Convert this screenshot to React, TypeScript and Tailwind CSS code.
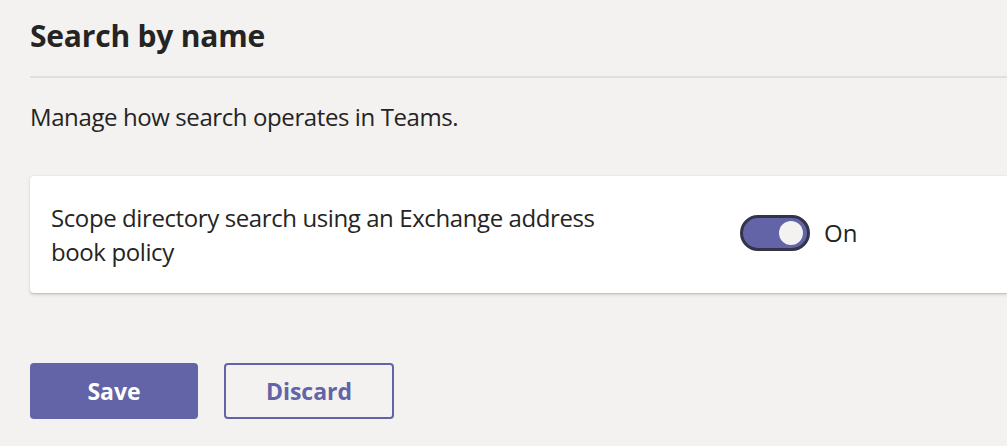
import React from "react";

export default function App() {
  return (
    <div className="w-[1007px] h-[446px] overflow-hidden bg-[#f3f2f1] text-[#252423]" style={{ fontFamily: '"Open Sans", "Noto Sans", sans-serif' }}>
      <div className="pl-[30px]">
        <div className="pt-[16px] h-[76px]">
          <h1 className="text-[30px] leading-[40px] font-bold tracking-[-0.2px]">Search by name</h1>
        </div>
        <div className="h-[2px] bg-[#e1dfdd]" />
        <p className="mt-[22px] text-[24px] leading-[34px] tracking-[-0.4px]">Manage how search operates in Teams.</p>
        <div className="mt-[42px] h-[117px] bg-white rounded-l-[4px] shadow-[0_1.6px_3.6px_rgba(0,0,0,0.13),0_0.3px_0.9px_rgba(0,0,0,0.11)] flex items-center pl-[21px]">
          <div className="w-[580px] text-[24px] leading-[34px] tracking-[-0.4px]">
            Scope directory search using an Exchange address book policy
          </div>
          <div className="ml-[109px] -mt-[3px] flex items-center">
            <div className="w-[70px] h-[36px] rounded-full border-[3px] border-[#33344a] bg-[#6264a7] flex items-center justify-end pr-[4px]">
              <div className="w-[24px] h-[24px] rounded-full bg-[#f3f2f1]" />
            </div>
            <span className="ml-[14px] text-[24px] leading-[34px]">On</span>
          </div>
        </div>
        <div className="mt-[70px] flex gap-[26px]">
          <button className="w-[168px] h-[56px] rounded-[4px] bg-[#6264a7] text-white text-[23px] font-bold">Save</button>
          <button className="w-[170px] h-[56px] rounded-[4px] border-2 border-[#6264a7] text-[#6264a7] text-[23px] font-bold">Discard</button>
        </div>
      </div>
    </div>
  );
}
